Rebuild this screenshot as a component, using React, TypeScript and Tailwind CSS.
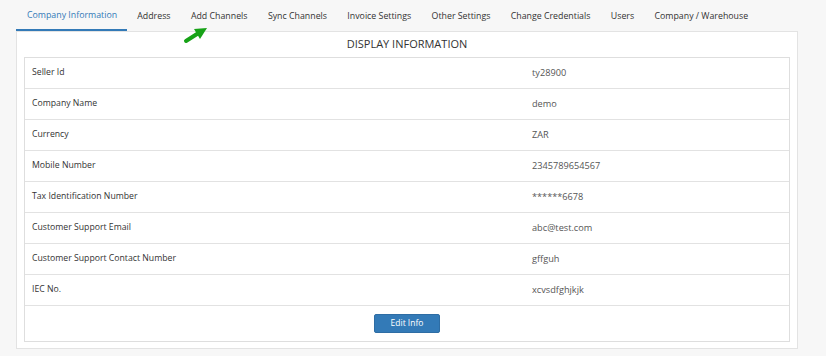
import React from "react";

const tabs = [
  "Company Information",
  "Address",
  "Add Channels",
  "Sync Channels",
  "Invoice Settings",
  "Other Settings",
  "Change Credentials",
  "Users",
  "Company / Warehouse",
];

const rows: [string, string][] = [
  ["Seller Id", "ty28900"],
  ["Company Name", "demo"],
  ["Currency", "ZAR"],
  ["Mobile Number", "2345789654567"],
  ["Tax Identification Number", "******6678"],
  ["Customer Support Email", "abc@test.com"],
  ["Customer Support Contact Number", "gffguh"],
  ["IEC No.", "xcvsdfghjkjk"],
];

export default function App() {
  return (
    <div
      className="w-[826px] h-[356px] bg-[#f7f7f7] overflow-hidden relative"
      style={{ fontFamily: '"Open Sans", "Liberation Sans", sans-serif' }}
    >
      <div className="pl-[16px] pr-[28px]">
        <div className="flex h-[31px] items-center whitespace-nowrap">
          {tabs.map((t, i) => (
            <div
              key={t}
              className={
                "h-full shrink-0 flex items-center pt-[2px] text-[8.8px] " +
                (i === 0
                  ? "pl-[11px] pr-[10px] text-[#337ab7] border-b-2 border-[#337ab7]"
                  : "px-[10.2px] text-[#333]")
              }
            >
              {t}
            </div>
          ))}
        </div>
        <div className="bg-white border border-[#e3e3e3] h-[318px] px-[7px]">
          <div className="h-[25px] flex items-center justify-center text-[11px] text-[#333]">
            DISPLAY INFORMATION
          </div>
          <div className="border border-[#dedede]">
            {rows.map(([k, v]) => (
              <div key={k} className="flex h-[31px] border-b border-[#e2e2e2] items-center">
                <div className="w-[500px] pl-[7px] text-[8.7px] text-[#333]">{k}</div>
                <div className="pl-[7px] text-[9.2px] text-[#555]">{v}</div>
              </div>
            ))}
            <div className="h-[35px] flex items-center justify-center">
              <button className="h-[19px] px-[16px] bg-[#337ab7] border border-[#2e6da4] rounded-[2px] text-white text-[8.5px]">
                Edit Info
              </button>
            </div>
          </div>
        </div>
      </div>
      <svg className="absolute left-[182px] top-[26px]" width="28" height="18" viewBox="0 0 28 18">
        <path d="M4 15 L15 8" stroke="#17a217" strokeWidth="4" strokeLinecap="round" />
        <polygon points="12,3 25,2 18,13" fill="#17a217" />
      </svg>
    </div>
  );
}
